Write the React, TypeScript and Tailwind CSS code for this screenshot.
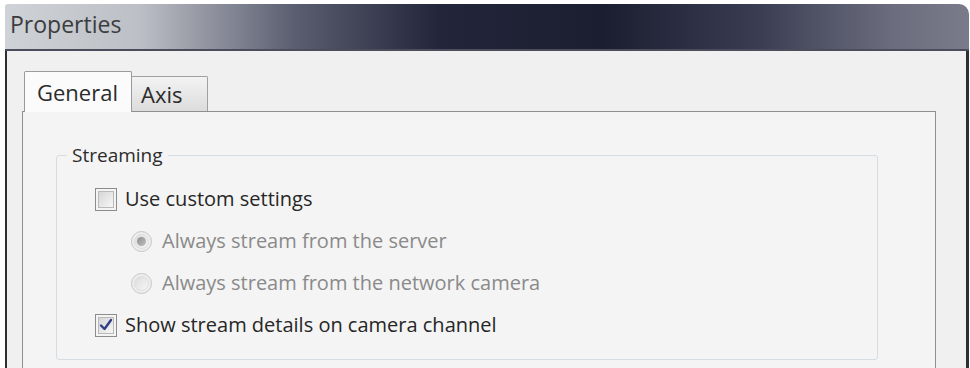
import React from "react";

const FONT = { fontFamily: '"Open Sans", "Noto Sans", "Liberation Sans", sans-serif' };

function CheckBox({ checked }: { checked?: boolean }) {
  return (
    <div className="w-[22px] h-[23px] shrink-0 border border-[#8c8c8c] bg-[#f4f4f4] p-[2px]">
      <div className="w-full h-full border border-[#b9b9b9] bg-gradient-to-br from-[#d6d6d6] to-[#f7f7f7] flex items-center justify-center">
        {checked && (
          <svg width="14" height="14" viewBox="0 0 14 14">
            <path d="M2 7.5 L5.5 11 L12 2" fill="none" stroke="#2f3f86" strokeWidth="2.4" strokeLinecap="round" strokeLinejoin="round" />
          </svg>
        )}
      </div>
    </div>
  );
}

function Radio({ checked }: { checked?: boolean }) {
  return (
    <div className="w-[21px] h-[21px] shrink-0 rounded-full border border-[#c6c6c6] bg-[#eeeeee] flex items-center justify-center">
      <div className="w-[15px] h-[15px] rounded-full border border-[#dedede] bg-gradient-to-br from-[#dcdcdc] to-[#f6f6f6] flex items-center justify-center">
        {checked && <div className="w-[9px] h-[9px] rounded-full bg-gradient-to-br from-[#8d8d8d] to-[#c2c2c2]" />}
      </div>
    </div>
  );
}

export default function App() {
  return (
    <div className="w-[970px] h-[368px] bg-white overflow-hidden pt-[4px] pl-[5px] pr-[1px]" style={FONT}>
      <div className="h-[47px] rounded-tr-[10px] rounded-tl-[3px] border-b-2 border-[#4b4d5c] bg-[linear-gradient(90deg,#cfd2d6_0%,#bcbfc5_14%,#5b5e70_30%,#23263a_45%,#1b1e30_62%,#3a3d52_78%,#6b6d7e_92%,#7a7b8a_100%)] flex items-center pl-[5px]">
        <span className="text-[23px] text-[#3c3c40] leading-none -mt-[4px]">Properties</span>
      </div>
      <div className="h-[320px] border-l-2 border-r-[3px] border-[#2e2e33] bg-[#f0f0f0] pl-[15px] pr-[30px] pt-[20px]">
        <div className="flex items-end h-[40px] pl-[2px]">
          <div className="relative z-10 w-[108px] h-[41px] -mb-[1px] border border-b-0 border-[#9a9a9a] rounded-t-[2px] bg-[#fbfbfb] flex items-center pl-[12px] text-[22px] text-[#2b2b2b]">
            General
          </div>
          <div className="w-[76px] h-[35px] border border-l-0 border-b-0 border-[#a0a0a0] rounded-tr-[2px] bg-gradient-to-b from-[#f3f3f3] to-[#dcdcdc] flex items-center pl-[9px] text-[22px] text-[#2b2b2b]">
            Axis
          </div>
        </div>
        <div className="h-[260px] border border-[#8f8f8f] bg-[#f4f4f4] pl-[33px] pr-[57px] pt-[32px]">
          <fieldset className="h-[216px] border border-[#d6dde2] rounded-[3px] pl-[10px] pr-[10px]">
            <legend className="px-[5px] text-[19px] text-[#2b2b2b] leading-[22px]">Streaming</legend>
            <div className="flex flex-col pt-[12px] pl-[28px]">
              <div className="flex items-center gap-[8px] h-[42px]">
                <CheckBox />
                <span className="text-[20px] text-[#262626]">Use custom settings</span>
              </div>
              <div className="flex items-center gap-[10px] h-[42px] pl-[36px]">
                <Radio checked />
                <span className="text-[20px] text-[#8a8a8a]">Always stream from the server</span>
              </div>
              <div className="flex items-center gap-[10px] h-[42px] pl-[36px]">
                <Radio />
                <span className="text-[20px] text-[#8a8a8a]">Always stream from the network camera</span>
              </div>
              <div className="flex items-center gap-[8px] h-[42px]">
                <CheckBox checked />
                <span className="text-[20px] text-[#262626]">Show stream details on camera channel</span>
              </div>
            </div>
          </fieldset>
        </div>
      </div>
    </div>
  );
}
